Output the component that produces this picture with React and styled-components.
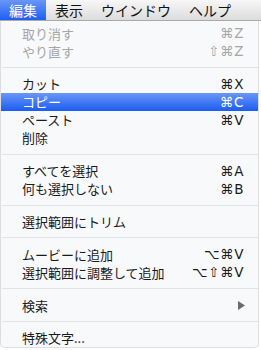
import React from 'react';
import styled, { createGlobalStyle } from 'styled-components';

const GlobalStyle = createGlobalStyle`
  html, body {
    margin: 0;
    padding: 0;
    background: #ffffff;
  }
  body {
    font-family: "Noto Sans CJK JP", "DejaVu Sans", sans-serif;
  }
`;

const Screen = styled.div`
  width: 261px;
  height: 350px;
  overflow: hidden;
  display: flex;
  flex-direction: column;
`;

const MenuBar = styled.div`
  height: 20px;
  display: flex;
  align-items: stretch;
  background: linear-gradient(#f7f7f7, #dcdcdc);
  border-bottom: 1px solid #a9a9a9;
`;

const BarItem = styled.div`
  padding: 0 9px;
  display: flex;
  align-items: center;
  font-size: 14px;
  line-height: 20px;
  color: ${(p) => (p.$active ? '#ffffff' : '#111111')};
  background: ${(p) =>
    p.$active ? 'linear-gradient(#6a96f7, #1d5ef3)' : 'transparent'};
`;

const Panel = styled.div`
  width: 259px;
  height: 327px;
  box-sizing: border-box;
  padding-top: 3px;
  background: #f8f9fb;
  border: 1px solid #dcdee2;
  border-top: none;
  border-radius: 0 0 5px 5px;
  display: flex;
  flex-direction: column;
`;

const Row = styled.div`
  height: 18px;
  display: flex;
  align-items: center;
  justify-content: space-between;
  padding: 0 14px 0 21px;
  font-size: 13px;
  color: ${(p) => (p.$disabled ? '#a6a6a6' : p.$selected ? '#ffffff' : '#1a1a1a')};
  background: ${(p) =>
    p.$selected ? 'linear-gradient(#6b96f6, #1a5cf2)' : 'transparent'};
`;

const Label = styled.span`
  white-space: nowrap;
`;

const Keys = styled.span`
  font-family: "DejaVu Sans", sans-serif;
  font-size: 13.5px;
  letter-spacing: 0.6px;
  white-space: nowrap;
`;

const Separator = styled.div`
  height: 1px;
  margin: 7px 0 7px 1px;
  background: #e1e3e7;
`;

const Arrow = styled.svg`
  width: 7px;
  height: 9px;
  margin-right: -1px;
`;

const groups = [
  [
    { label: '取り消す', keys: '⌘Z', disabled: true },
    { label: 'やり直す', keys: '⇧⌘Z', disabled: true },
  ],
  [
    { label: 'カット', keys: '⌘X' },
    { label: 'コピー', keys: '⌘C', selected: true },
    { label: 'ペースト', keys: '⌘V' },
    { label: '削除' },
  ],
  [
    { label: 'すべてを選択', keys: '⌘A' },
    { label: '何も選択しない', keys: '⌘B' },
  ],
  [{ label: '選択範囲にトリム' }],
  [
    { label: 'ムービーに追加', keys: '⌥⌘V' },
    { label: '選択範囲に調整して追加', keys: '⌥⇧⌘V' },
  ],
  [{ label: '検索', submenu: true }],
  [{ label: '特殊文字...' }],
];

const App = () => {
  return (
    <Screen>
      <GlobalStyle />
      <MenuBar>
        <BarItem $active>編集</BarItem>
        <BarItem>表示</BarItem>
        <BarItem>ウインドウ</BarItem>
        <BarItem>ヘルプ</BarItem>
      </MenuBar>
      <Panel>
        {groups.map((group, gi) => (
          <React.Fragment key={gi}>
            {gi > 0 && <Separator />}
            {group.map((item) => (
              <Row key={item.label} $disabled={item.disabled} $selected={item.selected}>
                <Label>{item.label}</Label>
                {item.keys && <Keys>{item.keys}</Keys>}
                {item.submenu && (
                  <Arrow viewBox="0 0 7 9">
                    <polygon points="0,0 7,4.5 0,9" fill="#6b6b6b" />
                  </Arrow>
                )}
              </Row>
            ))}
          </React.Fragment>
        ))}
      </Panel>
    </Screen>
  );
};

export default App;
